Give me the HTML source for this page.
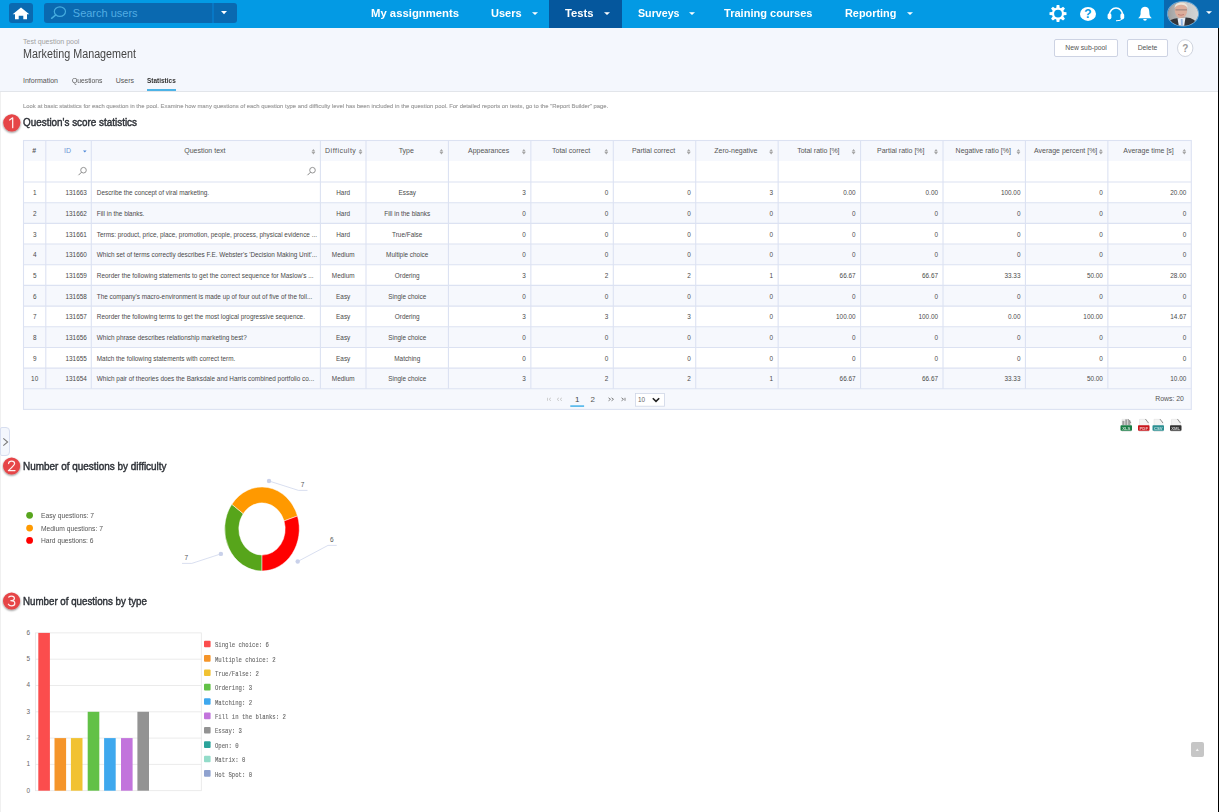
<!DOCTYPE html><html><head><meta charset="utf-8"><style>
html,body{margin:0;padding:0;}
body{width:1219px;height:812px;overflow:hidden;position:relative;background:#fff;font-family:"Liberation Sans",sans-serif;}
.t{position:absolute;white-space:nowrap;}
.r{position:absolute;}
svg{position:absolute;overflow:visible;}
</style></head><body>
<div class="r" style="left:0.00px;top:0.00px;width:1219.00px;height:28.00px;background:#039ae4;"></div>
<div class="r" style="left:9.00px;top:3.00px;width:24.00px;height:19.50px;background:#0a69b0;border-radius:3px;"></div>
<svg style="left:0;top:0" width="40" height="28"><path d="M21 7.6 L29.3 14.2 L27 14.2 L27 19.3 L23.3 19.3 L23.3 15.8 L18.7 15.8 L18.7 19.3 L15 19.3 L15 14.2 L12.7 14.2 Z" fill="#fff"/></svg>
<div class="r" style="left:44.00px;top:3.00px;width:193.00px;height:20.00px;background:#0a69b0;border-radius:3px;"></div>
<div class="r" style="left:212.30px;top:3.00px;width:1.40px;height:20.00px;background:#0778c6;"></div>
<svg style="left:0;top:0" width="240" height="28"><ellipse cx="59.9" cy="11.6" rx="5.6" ry="4.7" fill="none" stroke="#45acdf" stroke-width="1.2"/><line x1="55.8" y1="14.9" x2="51.6" y2="18.3" stroke="#45acdf" stroke-width="1.5" stroke-linecap="round"/><path d="M221 11 L227 11 L224 14.2 Z" fill="#fff"/></svg>
<div class="t" style="left:72.80px;top:7.59px;font-size:11px;line-height:11px;color:#52ade3;font-weight:normal;font-family:'Liberation Sans', sans-serif;">Search users</div>
<div class="t" style="left:370.70px;top:8.85px;font-size:10.1px;line-height:10.1px;color:#fff;font-weight:bold;font-family:'Liberation Sans', sans-serif;transform:scaleX(1.1209037776612891);transform-origin:left center;">My assignments</div>
<div class="t" style="left:491.30px;top:8.85px;font-size:10.1px;line-height:10.1px;color:#fff;font-weight:bold;font-family:'Liberation Sans', sans-serif;transform:scaleX(1.094215340537169);transform-origin:left center;">Users</div>
<div class="r" style="left:549.00px;top:0.00px;width:73.00px;height:28.00px;background:#05579d;"></div>
<div class="t" style="left:565.40px;top:8.85px;font-size:10.1px;line-height:10.1px;color:#fff;font-weight:bold;font-family:'Liberation Sans', sans-serif;transform:scaleX(1.1163572763644827);transform-origin:left center;">Tests</div>
<div class="t" style="left:638.00px;top:8.85px;font-size:10.1px;line-height:10.1px;color:#fff;font-weight:bold;font-family:'Liberation Sans', sans-serif;transform:scaleX(1.0566932064126295);transform-origin:left center;">Surveys</div>
<div class="t" style="left:723.50px;top:8.85px;font-size:10.1px;line-height:10.1px;color:#fff;font-weight:bold;font-family:'Liberation Sans', sans-serif;transform:scaleX(1.095823868101096);transform-origin:left center;">Training courses</div>
<div class="t" style="left:845.40px;top:8.85px;font-size:10.1px;line-height:10.1px;color:#fff;font-weight:bold;font-family:'Liberation Sans', sans-serif;transform:scaleX(1.078816401819554);transform-origin:left center;">Reporting</div>
<svg style="left:0;top:0" width="1219" height="28"><path d="M532 12.2 L538 12.2 L535 15 Z" fill="#fff"/><path d="M604 12.2 L610 12.2 L607 15 Z" fill="#fff"/><path d="M689 12.2 L695 12.2 L692 15 Z" fill="#fff"/><path d="M907 12.2 L913 12.2 L910 15 Z" fill="#fff"/></svg>
<svg style="left:0;top:0" width="1219" height="28">
<path transform="translate(1058,13.6)" fill="#fff" fill-rule="evenodd" d="M-1.68 -5.86 L-1.35 -8.49 L1.35 -8.49 L1.68 -5.86 L2.96 -5.34 L5.05 -6.96 L6.96 -5.05 L5.34 -2.96 L5.86 -1.68 L8.49 -1.35 L8.49 1.35 L5.86 1.68 L5.34 2.96 L6.96 5.05 L5.05 6.96 L2.96 5.34 L1.68 5.86 L1.35 8.49 L-1.35 8.49 L-1.68 5.86 L-2.96 5.34 L-5.05 6.96 L-6.96 5.05 L-5.34 2.96 L-5.86 1.68 L-8.49 1.35 L-8.49 -1.35 L-5.86 -1.68 L-5.34 -2.96 L-6.96 -5.05 L-5.05 -6.96 L-2.96 -5.34 Z M3.9 0 A3.9 3.9 0 1 0 -3.9 0 A3.9 3.9 0 1 0 3.9 0 Z"/>
<ellipse cx="1088" cy="13.9" rx="8" ry="7" fill="#fff"/>
<text x="1088" y="18.3" font-family="Liberation Sans" font-weight="bold" font-size="12" text-anchor="middle" fill="#039ae4">?</text>
<path d="M1109.5 15 A6.5 7 0 0 1 1122.5 15" fill="none" stroke="#fff" stroke-width="1.6"/>
<rect x="1107.6" y="13.2" width="3.8" height="6.2" rx="1.8" fill="#fff"/>
<rect x="1120.4" y="13.2" width="3.8" height="6.2" rx="1.8" fill="#fff"/>
<path d="M1122 19 Q1121 20.8 1116 20.8" fill="none" stroke="#fff" stroke-width="1"/>
<path d="M1145 6.8 C1141 6.8 1140.6 10.5 1140.6 13.5 C1140.6 16 1139.5 17 1138.2 18.3 L1151.8 18.3 C1150.5 17 1149.4 16 1149.4 13.5 C1149.4 10.5 1149 6.8 1145 6.8 Z" fill="#fff"/>
<path d="M1143.2 19 L1146.8 19 A1.8 1.8 0 0 1 1143.2 19 Z" fill="#fff"/>
</svg>
<div class="r" style="left:1163.50px;top:0.00px;width:55.50px;height:28.00px;background:#0a69b0;"></div>
<svg style="left:0;top:0" width="1219" height="28">
<defs><clipPath id="av"><ellipse cx="1183" cy="13.7" rx="15.2" ry="12"/></clipPath>
<linearGradient id="avbg" x1="0" x2="1" y1="0" y2="0"><stop offset="0" stop-color="#8c8c8c"/><stop offset="0.5" stop-color="#c8c8c8"/><stop offset="1" stop-color="#e0e0e0"/></linearGradient></defs>
<ellipse cx="1183" cy="13.7" rx="16" ry="12.8" fill="#6fb4e4"/>
<ellipse cx="1183" cy="13.7" rx="15.2" ry="12" fill="#1d5d96"/>
<g clip-path="url(#av)">
<rect x="1160" y="0" width="50" height="30" fill="url(#avbg)"/>
<ellipse cx="1181" cy="10.5" rx="6.2" ry="7.8" fill="#dcae9c"/>
<path d="M1174.5 8 Q1175 2.5 1181 2.5 Q1187.5 2.5 1187.8 8 Q1185 4.6 1181 4.8 Q1177 4.8 1174.5 8 Z" fill="#ece6da"/>
<rect x="1175.5" y="9.2" width="11.5" height="1.3" fill="#7a6a6a" opacity="0.55"/>
<path d="M1178 14.5 Q1181 16 1184 14.5" stroke="#b06060" stroke-width="0.9" fill="none" opacity="0.7"/>
<path d="M1163 30 Q1166 19.5 1177 18.3 L1186 17.5 Q1197 17.5 1200 30 Z" fill="#34353a"/>
<path d="M1177.5 18.3 L1185.5 17.6 L1183.5 30 L1179.5 30 Z" fill="#e6ebf3"/>
<path d="M1180.8 19 L1182.6 19 L1183 28 L1181 28 Z" fill="#94b6e2"/>
</g>
<path d="M1206 11.2 L1212 11.2 L1209 14 Z" fill="#fff"/>
</svg>
<div class="r" style="left:0.00px;top:28.00px;width:1219.00px;height:63.00px;background:#f4f7fd;"></div>
<div class="r" style="left:0.00px;top:91.00px;width:1219.00px;height:1.00px;background:#e2e5ea;"></div>
<div class="t" style="left:23.00px;top:38.07px;font-size:7px;line-height:7px;color:#a0a0a0;font-weight:normal;font-family:'Liberation Sans', sans-serif;">Test question pool</div>
<div class="t" style="left:23.00px;top:47.62px;font-size:12.5px;line-height:12.5px;color:#454545;font-weight:normal;font-family:'Liberation Sans', sans-serif;transform:scaleX(0.8604279296428843);transform-origin:left center;">Marketing Management</div>
<div class="t" style="left:23.00px;top:77.47px;font-size:7px;line-height:7px;color:#555;font-weight:normal;font-family:'Liberation Sans', sans-serif;">Information</div>
<div class="t" style="left:72.00px;top:77.47px;font-size:7px;line-height:7px;color:#555;font-weight:normal;font-family:'Liberation Sans', sans-serif;transform:scaleX(0.9673326990168094);transform-origin:left center;">Questions</div>
<div class="t" style="left:115.70px;top:77.47px;font-size:7px;line-height:7px;color:#555;font-weight:normal;font-family:'Liberation Sans', sans-serif;">Users</div>
<div class="t" style="left:147.20px;top:77.81px;font-size:6.6px;line-height:6.6px;color:#333;font-weight:bold;font-family:'Liberation Sans', sans-serif;transform:scaleX(0.98);transform-origin:left center;">Statistics</div>
<div class="r" style="left:147.00px;top:89.20px;width:29.00px;height:2.00px;background:#4db3e6;"></div>
<div class="r" style="left:1054.40px;top:39.00px;width:63.20px;height:17.50px;background:#fff;box-sizing:border-box;border:1px solid #cdd3e3;border-radius:2px;"></div>
<div class="t" style="left:886.00px;width:400px;text-align:center;top:45.04px;font-size:6.8px;line-height:6.8px;color:#555;font-weight:normal;font-family:'Liberation Sans', sans-serif;">New sub-pool</div>
<div class="r" style="left:1127.00px;top:39.00px;width:41.00px;height:17.50px;background:#fff;box-sizing:border-box;border:1px solid #cdd3e3;border-radius:2px;"></div>
<div class="t" style="left:947.50px;width:400px;text-align:center;top:45.04px;font-size:6.8px;line-height:6.8px;color:#555;font-weight:normal;font-family:'Liberation Sans', sans-serif;">Delete</div>
<svg style="left:0;top:0" width="1219" height="100"><ellipse cx="1185.2" cy="48.1" rx="7.7" ry="8.4" fill="#fff" stroke="#cfd4de" stroke-width="1"/><text x="1185.2" y="52" font-family="Liberation Sans" font-weight="bold" font-size="10" text-anchor="middle" fill="#9a9a9a">?</text></svg>
<div class="r" style="left:0.00px;top:92.00px;width:1.00px;height:720.00px;background:#f0f0f0;"></div>
<div class="r" style="left:1218.00px;top:28.00px;width:1.00px;height:784.00px;background:#000;"></div>
<div class="t" style="left:23.00px;top:104.43px;font-size:5.87px;line-height:5.87px;color:#9c9c9c;font-weight:normal;font-family:'Liberation Sans', sans-serif;transform:scaleX(1.003);transform-origin:left center;-webkit-text-stroke:0.15px #9c9c9c;">Look at basic statistics for each question in the pool. Examine how many questions of each question type and difficulty level has been included in the question pool. For detailed reports on tests, go to the "Report Builder" page.</div>
<svg style="left:0;top:0" width="40" height="812"><defs><filter id="sh1" x="-50%" y="-50%" width="200%" height="200%"><feGaussianBlur in="SourceAlpha" stdDeviation="1.0"/><feOffset dx="0.2" dy="1.4"/><feComponentTransfer><feFuncA type="linear" slope="0.5"/></feComponentTransfer><feMerge><feMergeNode/><feMergeNode in="SourceGraphic"/></feMerge></filter></defs><circle cx="11.8" cy="122.8" r="8.6" fill="#e64447" filter="url(#sh1)"/><path d="M12.70 127.70 L12.70 117.80 L9.60 120.00" fill="none" stroke="#fff" stroke-width="1.25" stroke-linecap="round" stroke-linejoin="round" opacity="0.92"/></svg>
<div class="t" style="left:23.00px;top:117.16px;font-size:10.8px;line-height:10.8px;color:#2e3238;font-weight:normal;font-family:'Liberation Sans', sans-serif;transform:scaleX(0.9156305584032104);transform-origin:left center;-webkit-text-stroke:0.45px #2e3238;">Question's score statistics</div>
<svg style="left:0;top:0" width="1219" height="812"><rect x="23.5" y="140.5" width="1167.80" height="20.5" fill="#f6f8fd"/><rect x="23.5" y="202.68" width="1167.80" height="20.68" fill="#f6f8fd"/><rect x="23.5" y="244.04" width="1167.80" height="20.68" fill="#f6f8fd"/><rect x="23.5" y="285.40" width="1167.80" height="20.68" fill="#f6f8fd"/><rect x="23.5" y="326.76" width="1167.80" height="20.68" fill="#f6f8fd"/><rect x="23.5" y="368.12" width="1167.80" height="20.68" fill="#f6f8fd"/><rect x="23.5" y="388.80" width="1167.80" height="20.60" fill="#f6f8fd"/><line x1="45.80" y1="140.5" x2="45.80" y2="388.80" stroke="#dce2f2" stroke-width="1.1"/><line x1="91.30" y1="140.5" x2="91.30" y2="388.80" stroke="#dce2f2" stroke-width="1.1"/><line x1="320.40" y1="140.5" x2="320.40" y2="388.80" stroke="#dce2f2" stroke-width="1.1"/><line x1="366.00" y1="140.5" x2="366.00" y2="388.80" stroke="#dce2f2" stroke-width="1.1"/><line x1="448.43" y1="140.5" x2="448.43" y2="388.80" stroke="#dce2f2" stroke-width="1.1"/><line x1="530.86" y1="140.5" x2="530.86" y2="388.80" stroke="#dce2f2" stroke-width="1.1"/><line x1="613.29" y1="140.5" x2="613.29" y2="388.80" stroke="#dce2f2" stroke-width="1.1"/><line x1="695.72" y1="140.5" x2="695.72" y2="388.80" stroke="#dce2f2" stroke-width="1.1"/><line x1="778.15" y1="140.5" x2="778.15" y2="388.80" stroke="#dce2f2" stroke-width="1.1"/><line x1="860.58" y1="140.5" x2="860.58" y2="388.80" stroke="#dce2f2" stroke-width="1.1"/><line x1="943.01" y1="140.5" x2="943.01" y2="388.80" stroke="#dce2f2" stroke-width="1.1"/><line x1="1025.44" y1="140.5" x2="1025.44" y2="388.80" stroke="#dce2f2" stroke-width="1.1"/><line x1="1107.87" y1="140.5" x2="1107.87" y2="388.80" stroke="#dce2f2" stroke-width="1.1"/><line x1="23.5" y1="182.00" x2="1191.3" y2="182.00" stroke="#dce2f2" stroke-width="1.1"/><line x1="23.5" y1="202.68" x2="1191.3" y2="202.68" stroke="#dce2f2" stroke-width="1.1"/><line x1="23.5" y1="223.36" x2="1191.3" y2="223.36" stroke="#dce2f2" stroke-width="1.1"/><line x1="23.5" y1="244.04" x2="1191.3" y2="244.04" stroke="#dce2f2" stroke-width="1.1"/><line x1="23.5" y1="264.72" x2="1191.3" y2="264.72" stroke="#dce2f2" stroke-width="1.1"/><line x1="23.5" y1="285.40" x2="1191.3" y2="285.40" stroke="#dce2f2" stroke-width="1.1"/><line x1="23.5" y1="306.08" x2="1191.3" y2="306.08" stroke="#dce2f2" stroke-width="1.1"/><line x1="23.5" y1="326.76" x2="1191.3" y2="326.76" stroke="#dce2f2" stroke-width="1.1"/><line x1="23.5" y1="347.44" x2="1191.3" y2="347.44" stroke="#dce2f2" stroke-width="1.1"/><line x1="23.5" y1="368.12" x2="1191.3" y2="368.12" stroke="#dce2f2" stroke-width="1.1"/><line x1="23.5" y1="388.80" x2="1191.3" y2="388.80" stroke="#dce2f2" stroke-width="1.1"/><rect x="23.5" y="140.5" width="1167.80" height="268.90" fill="none" stroke="#dce2f2" stroke-width="1.1"/></svg>
<div class="t" style="left:-165.85px;width:400px;text-align:center;top:147.27px;font-size:7px;line-height:7px;color:#555;font-weight:bold;font-family:'Liberation Sans', sans-serif;">#</div>
<div class="t" style="left:-132.45px;width:400px;text-align:center;top:147.27px;font-size:7px;line-height:7px;color:#6a94d4;font-weight:normal;font-family:'Liberation Sans', sans-serif;">ID</div>
<div class="t" style="left:4.85px;width:400px;text-align:center;top:147.27px;font-size:7px;line-height:7px;color:#555;font-weight:normal;font-family:'Liberation Sans', sans-serif;">Question text</div>
<div class="t" style="left:140.70px;width:400px;text-align:center;top:147.27px;font-size:7px;line-height:7px;color:#555;font-weight:normal;font-family:'Liberation Sans', sans-serif;letter-spacing:0.5px;">Difficulty</div>
<div class="t" style="left:206.22px;width:400px;text-align:center;top:147.27px;font-size:7px;line-height:7px;color:#555;font-weight:normal;font-family:'Liberation Sans', sans-serif;">Type</div>
<div class="t" style="left:288.64px;width:400px;text-align:center;top:147.27px;font-size:7px;line-height:7px;color:#555;font-weight:normal;font-family:'Liberation Sans', sans-serif;">Appearances</div>
<div class="t" style="left:371.08px;width:400px;text-align:center;top:147.27px;font-size:7px;line-height:7px;color:#555;font-weight:normal;font-family:'Liberation Sans', sans-serif;">Total correct</div>
<div class="t" style="left:453.50px;width:400px;text-align:center;top:147.27px;font-size:7px;line-height:7px;color:#555;font-weight:normal;font-family:'Liberation Sans', sans-serif;">Partial correct</div>
<div class="t" style="left:535.94px;width:400px;text-align:center;top:147.27px;font-size:7px;line-height:7px;color:#555;font-weight:normal;font-family:'Liberation Sans', sans-serif;">Zero-negative</div>
<div class="t" style="left:618.37px;width:400px;text-align:center;top:147.27px;font-size:7px;line-height:7px;color:#555;font-weight:normal;font-family:'Liberation Sans', sans-serif;">Total ratio [%]</div>
<div class="t" style="left:700.80px;width:400px;text-align:center;top:147.27px;font-size:7px;line-height:7px;color:#555;font-weight:normal;font-family:'Liberation Sans', sans-serif;">Partial ratio [%]</div>
<div class="t" style="left:783.23px;width:400px;text-align:center;top:147.27px;font-size:7px;line-height:7px;color:#555;font-weight:normal;font-family:'Liberation Sans', sans-serif;">Negative ratio [%]</div>
<div class="t" style="left:865.66px;width:400px;text-align:center;top:147.27px;font-size:7px;line-height:7px;color:#555;font-weight:normal;font-family:'Liberation Sans', sans-serif;">Average percent [%]</div>
<div class="t" style="left:948.59px;width:400px;text-align:center;top:147.27px;font-size:7px;line-height:7px;color:#555;font-weight:normal;font-family:'Liberation Sans', sans-serif;">Average time [s]</div>
<svg style="left:0;top:0" width="1219" height="200"><path d="M83.0 150.6 L86.6 150.6 L84.8 152.6 Z" fill="#4a86d8"/><path d="M311.5 151.5 L315.29999999999995 151.5 L313.4 149.0 Z M311.5 152.1 L315.29999999999995 152.1 L313.4 154.6 Z" fill="#a6a6a6"/><path d="M358.6 151.5 L362.4 151.5 L360.5 149.0 Z M358.6 152.1 L362.4 152.1 L360.5 154.6 Z" fill="#a6a6a6"/><path d="M439.53000000000003 151.5 L443.33 151.5 L441.43 149.0 Z M439.53000000000003 152.1 L443.33 152.1 L441.43 154.6 Z" fill="#a6a6a6"/><path d="M521.96 151.5 L525.76 151.5 L523.86 149.0 Z M521.96 152.1 L525.76 152.1 L523.86 154.6 Z" fill="#a6a6a6"/><path d="M604.39 151.5 L608.1899999999999 151.5 L606.29 149.0 Z M604.39 152.1 L608.1899999999999 152.1 L606.29 154.6 Z" fill="#a6a6a6"/><path d="M686.82 151.5 L690.62 151.5 L688.72 149.0 Z M686.82 152.1 L690.62 152.1 L688.72 154.6 Z" fill="#a6a6a6"/><path d="M769.2500000000001 151.5 L773.0500000000001 151.5 L771.1500000000001 149.0 Z M769.2500000000001 152.1 L773.0500000000001 152.1 L771.1500000000001 154.6 Z" fill="#a6a6a6"/><path d="M851.6800000000001 151.5 L855.48 151.5 L853.58 149.0 Z M851.6800000000001 152.1 L855.48 152.1 L853.58 154.6 Z" fill="#a6a6a6"/><path d="M934.11 151.5 L937.91 151.5 L936.01 149.0 Z M934.11 152.1 L937.91 152.1 L936.01 154.6 Z" fill="#a6a6a6"/><path d="M1016.5400000000001 151.5 L1020.34 151.5 L1018.44 149.0 Z M1016.5400000000001 152.1 L1020.34 152.1 L1018.44 154.6 Z" fill="#a6a6a6"/><path d="M1098.97 151.5 L1102.7700000000002 151.5 L1100.8700000000001 149.0 Z M1098.97 152.1 L1102.7700000000002 152.1 L1100.8700000000001 154.6 Z" fill="#a6a6a6"/><path d="M1182.3999999999999 151.5 L1186.2 151.5 L1184.3 149.0 Z M1182.3999999999999 152.1 L1186.2 152.1 L1184.3 154.6 Z" fill="#a6a6a6"/><circle cx="83.5" cy="170.2" r="2.8" fill="none" stroke="#888" stroke-width="0.9"/><line x1="81.5" y1="172.2" x2="78.5" y2="175.2" stroke="#888" stroke-width="1"/><circle cx="312.5" cy="170.2" r="2.8" fill="none" stroke="#888" stroke-width="0.9"/><line x1="310.5" y1="172.2" x2="307.5" y2="175.2" stroke="#888" stroke-width="1"/></svg>
<div class="t" style="left:-165.35px;width:400px;text-align:center;top:190.28px;font-size:6.4px;line-height:6.4px;color:#4a4a4a;font-weight:normal;font-family:'Liberation Sans', sans-serif;">1</div>
<div class="t" style="right:1132.20px;top:190.28px;font-size:6.4px;line-height:6.4px;color:#4a4a4a;font-weight:normal;font-family:'Liberation Sans', sans-serif;">131663</div>
<div class="t" style="left:96.80px;top:190.28px;font-size:6.4px;line-height:6.4px;color:#4a4a4a;font-weight:normal;font-family:'Liberation Sans', sans-serif;">Describe the concept of viral marketing.</div>
<div class="t" style="left:143.20px;width:400px;text-align:center;top:190.28px;font-size:6.4px;line-height:6.4px;color:#4a4a4a;font-weight:normal;font-family:'Liberation Sans', sans-serif;">Hard</div>
<div class="t" style="left:207.22px;width:400px;text-align:center;top:190.28px;font-size:6.4px;line-height:6.4px;color:#4a4a4a;font-weight:normal;font-family:'Liberation Sans', sans-serif;">Essay</div>
<div class="t" style="right:693.14px;top:190.28px;font-size:6.4px;line-height:6.4px;color:#4a4a4a;font-weight:normal;font-family:'Liberation Sans', sans-serif;">3</div>
<div class="t" style="right:610.71px;top:190.28px;font-size:6.4px;line-height:6.4px;color:#4a4a4a;font-weight:normal;font-family:'Liberation Sans', sans-serif;">0</div>
<div class="t" style="right:528.28px;top:190.28px;font-size:6.4px;line-height:6.4px;color:#4a4a4a;font-weight:normal;font-family:'Liberation Sans', sans-serif;">0</div>
<div class="t" style="right:445.85px;top:190.28px;font-size:6.4px;line-height:6.4px;color:#4a4a4a;font-weight:normal;font-family:'Liberation Sans', sans-serif;">3</div>
<div class="t" style="right:363.42px;top:190.28px;font-size:6.4px;line-height:6.4px;color:#4a4a4a;font-weight:normal;font-family:'Liberation Sans', sans-serif;">0.00</div>
<div class="t" style="right:280.99px;top:190.28px;font-size:6.4px;line-height:6.4px;color:#4a4a4a;font-weight:normal;font-family:'Liberation Sans', sans-serif;">0.00</div>
<div class="t" style="right:198.56px;top:190.28px;font-size:6.4px;line-height:6.4px;color:#4a4a4a;font-weight:normal;font-family:'Liberation Sans', sans-serif;">100.00</div>
<div class="t" style="right:116.13px;top:190.28px;font-size:6.4px;line-height:6.4px;color:#4a4a4a;font-weight:normal;font-family:'Liberation Sans', sans-serif;">0</div>
<div class="t" style="right:32.70px;top:190.28px;font-size:6.4px;line-height:6.4px;color:#4a4a4a;font-weight:normal;font-family:'Liberation Sans', sans-serif;">20.00</div>
<div class="t" style="left:-165.35px;width:400px;text-align:center;top:210.96px;font-size:6.4px;line-height:6.4px;color:#4a4a4a;font-weight:normal;font-family:'Liberation Sans', sans-serif;">2</div>
<div class="t" style="right:1132.20px;top:210.96px;font-size:6.4px;line-height:6.4px;color:#4a4a4a;font-weight:normal;font-family:'Liberation Sans', sans-serif;">131662</div>
<div class="t" style="left:96.80px;top:210.96px;font-size:6.4px;line-height:6.4px;color:#4a4a4a;font-weight:normal;font-family:'Liberation Sans', sans-serif;">Fill in the blanks.</div>
<div class="t" style="left:143.20px;width:400px;text-align:center;top:210.96px;font-size:6.4px;line-height:6.4px;color:#4a4a4a;font-weight:normal;font-family:'Liberation Sans', sans-serif;">Hard</div>
<div class="t" style="left:207.22px;width:400px;text-align:center;top:210.96px;font-size:6.4px;line-height:6.4px;color:#4a4a4a;font-weight:normal;font-family:'Liberation Sans', sans-serif;">Fill in the blanks</div>
<div class="t" style="right:693.14px;top:210.96px;font-size:6.4px;line-height:6.4px;color:#4a4a4a;font-weight:normal;font-family:'Liberation Sans', sans-serif;">0</div>
<div class="t" style="right:610.71px;top:210.96px;font-size:6.4px;line-height:6.4px;color:#4a4a4a;font-weight:normal;font-family:'Liberation Sans', sans-serif;">0</div>
<div class="t" style="right:528.28px;top:210.96px;font-size:6.4px;line-height:6.4px;color:#4a4a4a;font-weight:normal;font-family:'Liberation Sans', sans-serif;">0</div>
<div class="t" style="right:445.85px;top:210.96px;font-size:6.4px;line-height:6.4px;color:#4a4a4a;font-weight:normal;font-family:'Liberation Sans', sans-serif;">0</div>
<div class="t" style="right:363.42px;top:210.96px;font-size:6.4px;line-height:6.4px;color:#4a4a4a;font-weight:normal;font-family:'Liberation Sans', sans-serif;">0</div>
<div class="t" style="right:280.99px;top:210.96px;font-size:6.4px;line-height:6.4px;color:#4a4a4a;font-weight:normal;font-family:'Liberation Sans', sans-serif;">0</div>
<div class="t" style="right:198.56px;top:210.96px;font-size:6.4px;line-height:6.4px;color:#4a4a4a;font-weight:normal;font-family:'Liberation Sans', sans-serif;">0</div>
<div class="t" style="right:116.13px;top:210.96px;font-size:6.4px;line-height:6.4px;color:#4a4a4a;font-weight:normal;font-family:'Liberation Sans', sans-serif;">0</div>
<div class="t" style="right:32.70px;top:210.96px;font-size:6.4px;line-height:6.4px;color:#4a4a4a;font-weight:normal;font-family:'Liberation Sans', sans-serif;">0</div>
<div class="t" style="left:-165.35px;width:400px;text-align:center;top:231.64px;font-size:6.4px;line-height:6.4px;color:#4a4a4a;font-weight:normal;font-family:'Liberation Sans', sans-serif;">3</div>
<div class="t" style="right:1132.20px;top:231.64px;font-size:6.4px;line-height:6.4px;color:#4a4a4a;font-weight:normal;font-family:'Liberation Sans', sans-serif;">131661</div>
<div class="t" style="left:96.80px;top:231.64px;font-size:6.4px;line-height:6.4px;color:#4a4a4a;font-weight:normal;font-family:'Liberation Sans', sans-serif;">Terms: product, price, place, promotion, people, process, physical evidence ...</div>
<div class="t" style="left:143.20px;width:400px;text-align:center;top:231.64px;font-size:6.4px;line-height:6.4px;color:#4a4a4a;font-weight:normal;font-family:'Liberation Sans', sans-serif;">Hard</div>
<div class="t" style="left:207.22px;width:400px;text-align:center;top:231.64px;font-size:6.4px;line-height:6.4px;color:#4a4a4a;font-weight:normal;font-family:'Liberation Sans', sans-serif;">True/False</div>
<div class="t" style="right:693.14px;top:231.64px;font-size:6.4px;line-height:6.4px;color:#4a4a4a;font-weight:normal;font-family:'Liberation Sans', sans-serif;">0</div>
<div class="t" style="right:610.71px;top:231.64px;font-size:6.4px;line-height:6.4px;color:#4a4a4a;font-weight:normal;font-family:'Liberation Sans', sans-serif;">0</div>
<div class="t" style="right:528.28px;top:231.64px;font-size:6.4px;line-height:6.4px;color:#4a4a4a;font-weight:normal;font-family:'Liberation Sans', sans-serif;">0</div>
<div class="t" style="right:445.85px;top:231.64px;font-size:6.4px;line-height:6.4px;color:#4a4a4a;font-weight:normal;font-family:'Liberation Sans', sans-serif;">0</div>
<div class="t" style="right:363.42px;top:231.64px;font-size:6.4px;line-height:6.4px;color:#4a4a4a;font-weight:normal;font-family:'Liberation Sans', sans-serif;">0</div>
<div class="t" style="right:280.99px;top:231.64px;font-size:6.4px;line-height:6.4px;color:#4a4a4a;font-weight:normal;font-family:'Liberation Sans', sans-serif;">0</div>
<div class="t" style="right:198.56px;top:231.64px;font-size:6.4px;line-height:6.4px;color:#4a4a4a;font-weight:normal;font-family:'Liberation Sans', sans-serif;">0</div>
<div class="t" style="right:116.13px;top:231.64px;font-size:6.4px;line-height:6.4px;color:#4a4a4a;font-weight:normal;font-family:'Liberation Sans', sans-serif;">0</div>
<div class="t" style="right:32.70px;top:231.64px;font-size:6.4px;line-height:6.4px;color:#4a4a4a;font-weight:normal;font-family:'Liberation Sans', sans-serif;">0</div>
<div class="t" style="left:-165.35px;width:400px;text-align:center;top:252.32px;font-size:6.4px;line-height:6.4px;color:#4a4a4a;font-weight:normal;font-family:'Liberation Sans', sans-serif;">4</div>
<div class="t" style="right:1132.20px;top:252.32px;font-size:6.4px;line-height:6.4px;color:#4a4a4a;font-weight:normal;font-family:'Liberation Sans', sans-serif;">131660</div>
<div class="t" style="left:96.80px;top:252.32px;font-size:6.4px;line-height:6.4px;color:#4a4a4a;font-weight:normal;font-family:'Liberation Sans', sans-serif;">Which set of terms correctly describes F.E. Webster's 'Decision Making Unit'...</div>
<div class="t" style="left:143.20px;width:400px;text-align:center;top:252.32px;font-size:6.4px;line-height:6.4px;color:#4a4a4a;font-weight:normal;font-family:'Liberation Sans', sans-serif;">Medium</div>
<div class="t" style="left:207.22px;width:400px;text-align:center;top:252.32px;font-size:6.4px;line-height:6.4px;color:#4a4a4a;font-weight:normal;font-family:'Liberation Sans', sans-serif;">Multiple choice</div>
<div class="t" style="right:693.14px;top:252.32px;font-size:6.4px;line-height:6.4px;color:#4a4a4a;font-weight:normal;font-family:'Liberation Sans', sans-serif;">0</div>
<div class="t" style="right:610.71px;top:252.32px;font-size:6.4px;line-height:6.4px;color:#4a4a4a;font-weight:normal;font-family:'Liberation Sans', sans-serif;">0</div>
<div class="t" style="right:528.28px;top:252.32px;font-size:6.4px;line-height:6.4px;color:#4a4a4a;font-weight:normal;font-family:'Liberation Sans', sans-serif;">0</div>
<div class="t" style="right:445.85px;top:252.32px;font-size:6.4px;line-height:6.4px;color:#4a4a4a;font-weight:normal;font-family:'Liberation Sans', sans-serif;">0</div>
<div class="t" style="right:363.42px;top:252.32px;font-size:6.4px;line-height:6.4px;color:#4a4a4a;font-weight:normal;font-family:'Liberation Sans', sans-serif;">0</div>
<div class="t" style="right:280.99px;top:252.32px;font-size:6.4px;line-height:6.4px;color:#4a4a4a;font-weight:normal;font-family:'Liberation Sans', sans-serif;">0</div>
<div class="t" style="right:198.56px;top:252.32px;font-size:6.4px;line-height:6.4px;color:#4a4a4a;font-weight:normal;font-family:'Liberation Sans', sans-serif;">0</div>
<div class="t" style="right:116.13px;top:252.32px;font-size:6.4px;line-height:6.4px;color:#4a4a4a;font-weight:normal;font-family:'Liberation Sans', sans-serif;">0</div>
<div class="t" style="right:32.70px;top:252.32px;font-size:6.4px;line-height:6.4px;color:#4a4a4a;font-weight:normal;font-family:'Liberation Sans', sans-serif;">0</div>
<div class="t" style="left:-165.35px;width:400px;text-align:center;top:273.00px;font-size:6.4px;line-height:6.4px;color:#4a4a4a;font-weight:normal;font-family:'Liberation Sans', sans-serif;">5</div>
<div class="t" style="right:1132.20px;top:273.00px;font-size:6.4px;line-height:6.4px;color:#4a4a4a;font-weight:normal;font-family:'Liberation Sans', sans-serif;">131659</div>
<div class="t" style="left:96.80px;top:273.00px;font-size:6.4px;line-height:6.4px;color:#4a4a4a;font-weight:normal;font-family:'Liberation Sans', sans-serif;">Reorder the following statements to get the correct sequence for Maslow's ...</div>
<div class="t" style="left:143.20px;width:400px;text-align:center;top:273.00px;font-size:6.4px;line-height:6.4px;color:#4a4a4a;font-weight:normal;font-family:'Liberation Sans', sans-serif;">Medium</div>
<div class="t" style="left:207.22px;width:400px;text-align:center;top:273.00px;font-size:6.4px;line-height:6.4px;color:#4a4a4a;font-weight:normal;font-family:'Liberation Sans', sans-serif;">Ordering</div>
<div class="t" style="right:693.14px;top:273.00px;font-size:6.4px;line-height:6.4px;color:#4a4a4a;font-weight:normal;font-family:'Liberation Sans', sans-serif;">3</div>
<div class="t" style="right:610.71px;top:273.00px;font-size:6.4px;line-height:6.4px;color:#4a4a4a;font-weight:normal;font-family:'Liberation Sans', sans-serif;">2</div>
<div class="t" style="right:528.28px;top:273.00px;font-size:6.4px;line-height:6.4px;color:#4a4a4a;font-weight:normal;font-family:'Liberation Sans', sans-serif;">2</div>
<div class="t" style="right:445.85px;top:273.00px;font-size:6.4px;line-height:6.4px;color:#4a4a4a;font-weight:normal;font-family:'Liberation Sans', sans-serif;">1</div>
<div class="t" style="right:363.42px;top:273.00px;font-size:6.4px;line-height:6.4px;color:#4a4a4a;font-weight:normal;font-family:'Liberation Sans', sans-serif;">66.67</div>
<div class="t" style="right:280.99px;top:273.00px;font-size:6.4px;line-height:6.4px;color:#4a4a4a;font-weight:normal;font-family:'Liberation Sans', sans-serif;">66.67</div>
<div class="t" style="right:198.56px;top:273.00px;font-size:6.4px;line-height:6.4px;color:#4a4a4a;font-weight:normal;font-family:'Liberation Sans', sans-serif;">33.33</div>
<div class="t" style="right:116.13px;top:273.00px;font-size:6.4px;line-height:6.4px;color:#4a4a4a;font-weight:normal;font-family:'Liberation Sans', sans-serif;">50.00</div>
<div class="t" style="right:32.70px;top:273.00px;font-size:6.4px;line-height:6.4px;color:#4a4a4a;font-weight:normal;font-family:'Liberation Sans', sans-serif;">28.00</div>
<div class="t" style="left:-165.35px;width:400px;text-align:center;top:293.68px;font-size:6.4px;line-height:6.4px;color:#4a4a4a;font-weight:normal;font-family:'Liberation Sans', sans-serif;">6</div>
<div class="t" style="right:1132.20px;top:293.68px;font-size:6.4px;line-height:6.4px;color:#4a4a4a;font-weight:normal;font-family:'Liberation Sans', sans-serif;">131658</div>
<div class="t" style="left:96.80px;top:293.68px;font-size:6.4px;line-height:6.4px;color:#4a4a4a;font-weight:normal;font-family:'Liberation Sans', sans-serif;">The company's macro-environment is made up of four out of five of the foll...</div>
<div class="t" style="left:143.20px;width:400px;text-align:center;top:293.68px;font-size:6.4px;line-height:6.4px;color:#4a4a4a;font-weight:normal;font-family:'Liberation Sans', sans-serif;">Easy</div>
<div class="t" style="left:207.22px;width:400px;text-align:center;top:293.68px;font-size:6.4px;line-height:6.4px;color:#4a4a4a;font-weight:normal;font-family:'Liberation Sans', sans-serif;">Single choice</div>
<div class="t" style="right:693.14px;top:293.68px;font-size:6.4px;line-height:6.4px;color:#4a4a4a;font-weight:normal;font-family:'Liberation Sans', sans-serif;">0</div>
<div class="t" style="right:610.71px;top:293.68px;font-size:6.4px;line-height:6.4px;color:#4a4a4a;font-weight:normal;font-family:'Liberation Sans', sans-serif;">0</div>
<div class="t" style="right:528.28px;top:293.68px;font-size:6.4px;line-height:6.4px;color:#4a4a4a;font-weight:normal;font-family:'Liberation Sans', sans-serif;">0</div>
<div class="t" style="right:445.85px;top:293.68px;font-size:6.4px;line-height:6.4px;color:#4a4a4a;font-weight:normal;font-family:'Liberation Sans', sans-serif;">0</div>
<div class="t" style="right:363.42px;top:293.68px;font-size:6.4px;line-height:6.4px;color:#4a4a4a;font-weight:normal;font-family:'Liberation Sans', sans-serif;">0</div>
<div class="t" style="right:280.99px;top:293.68px;font-size:6.4px;line-height:6.4px;color:#4a4a4a;font-weight:normal;font-family:'Liberation Sans', sans-serif;">0</div>
<div class="t" style="right:198.56px;top:293.68px;font-size:6.4px;line-height:6.4px;color:#4a4a4a;font-weight:normal;font-family:'Liberation Sans', sans-serif;">0</div>
<div class="t" style="right:116.13px;top:293.68px;font-size:6.4px;line-height:6.4px;color:#4a4a4a;font-weight:normal;font-family:'Liberation Sans', sans-serif;">0</div>
<div class="t" style="right:32.70px;top:293.68px;font-size:6.4px;line-height:6.4px;color:#4a4a4a;font-weight:normal;font-family:'Liberation Sans', sans-serif;">0</div>
<div class="t" style="left:-165.35px;width:400px;text-align:center;top:314.36px;font-size:6.4px;line-height:6.4px;color:#4a4a4a;font-weight:normal;font-family:'Liberation Sans', sans-serif;">7</div>
<div class="t" style="right:1132.20px;top:314.36px;font-size:6.4px;line-height:6.4px;color:#4a4a4a;font-weight:normal;font-family:'Liberation Sans', sans-serif;">131657</div>
<div class="t" style="left:96.80px;top:314.36px;font-size:6.4px;line-height:6.4px;color:#4a4a4a;font-weight:normal;font-family:'Liberation Sans', sans-serif;">Reorder the following terms to get the most logical progressive sequence.</div>
<div class="t" style="left:143.20px;width:400px;text-align:center;top:314.36px;font-size:6.4px;line-height:6.4px;color:#4a4a4a;font-weight:normal;font-family:'Liberation Sans', sans-serif;">Easy</div>
<div class="t" style="left:207.22px;width:400px;text-align:center;top:314.36px;font-size:6.4px;line-height:6.4px;color:#4a4a4a;font-weight:normal;font-family:'Liberation Sans', sans-serif;">Ordering</div>
<div class="t" style="right:693.14px;top:314.36px;font-size:6.4px;line-height:6.4px;color:#4a4a4a;font-weight:normal;font-family:'Liberation Sans', sans-serif;">3</div>
<div class="t" style="right:610.71px;top:314.36px;font-size:6.4px;line-height:6.4px;color:#4a4a4a;font-weight:normal;font-family:'Liberation Sans', sans-serif;">3</div>
<div class="t" style="right:528.28px;top:314.36px;font-size:6.4px;line-height:6.4px;color:#4a4a4a;font-weight:normal;font-family:'Liberation Sans', sans-serif;">3</div>
<div class="t" style="right:445.85px;top:314.36px;font-size:6.4px;line-height:6.4px;color:#4a4a4a;font-weight:normal;font-family:'Liberation Sans', sans-serif;">0</div>
<div class="t" style="right:363.42px;top:314.36px;font-size:6.4px;line-height:6.4px;color:#4a4a4a;font-weight:normal;font-family:'Liberation Sans', sans-serif;">100.00</div>
<div class="t" style="right:280.99px;top:314.36px;font-size:6.4px;line-height:6.4px;color:#4a4a4a;font-weight:normal;font-family:'Liberation Sans', sans-serif;">100.00</div>
<div class="t" style="right:198.56px;top:314.36px;font-size:6.4px;line-height:6.4px;color:#4a4a4a;font-weight:normal;font-family:'Liberation Sans', sans-serif;">0.00</div>
<div class="t" style="right:116.13px;top:314.36px;font-size:6.4px;line-height:6.4px;color:#4a4a4a;font-weight:normal;font-family:'Liberation Sans', sans-serif;">100.00</div>
<div class="t" style="right:32.70px;top:314.36px;font-size:6.4px;line-height:6.4px;color:#4a4a4a;font-weight:normal;font-family:'Liberation Sans', sans-serif;">14.67</div>
<div class="t" style="left:-165.35px;width:400px;text-align:center;top:335.04px;font-size:6.4px;line-height:6.4px;color:#4a4a4a;font-weight:normal;font-family:'Liberation Sans', sans-serif;">8</div>
<div class="t" style="right:1132.20px;top:335.04px;font-size:6.4px;line-height:6.4px;color:#4a4a4a;font-weight:normal;font-family:'Liberation Sans', sans-serif;">131656</div>
<div class="t" style="left:96.80px;top:335.04px;font-size:6.4px;line-height:6.4px;color:#4a4a4a;font-weight:normal;font-family:'Liberation Sans', sans-serif;">Which phrase describes relationship marketing best?</div>
<div class="t" style="left:143.20px;width:400px;text-align:center;top:335.04px;font-size:6.4px;line-height:6.4px;color:#4a4a4a;font-weight:normal;font-family:'Liberation Sans', sans-serif;">Easy</div>
<div class="t" style="left:207.22px;width:400px;text-align:center;top:335.04px;font-size:6.4px;line-height:6.4px;color:#4a4a4a;font-weight:normal;font-family:'Liberation Sans', sans-serif;">Single choice</div>
<div class="t" style="right:693.14px;top:335.04px;font-size:6.4px;line-height:6.4px;color:#4a4a4a;font-weight:normal;font-family:'Liberation Sans', sans-serif;">0</div>
<div class="t" style="right:610.71px;top:335.04px;font-size:6.4px;line-height:6.4px;color:#4a4a4a;font-weight:normal;font-family:'Liberation Sans', sans-serif;">0</div>
<div class="t" style="right:528.28px;top:335.04px;font-size:6.4px;line-height:6.4px;color:#4a4a4a;font-weight:normal;font-family:'Liberation Sans', sans-serif;">0</div>
<div class="t" style="right:445.85px;top:335.04px;font-size:6.4px;line-height:6.4px;color:#4a4a4a;font-weight:normal;font-family:'Liberation Sans', sans-serif;">0</div>
<div class="t" style="right:363.42px;top:335.04px;font-size:6.4px;line-height:6.4px;color:#4a4a4a;font-weight:normal;font-family:'Liberation Sans', sans-serif;">0</div>
<div class="t" style="right:280.99px;top:335.04px;font-size:6.4px;line-height:6.4px;color:#4a4a4a;font-weight:normal;font-family:'Liberation Sans', sans-serif;">0</div>
<div class="t" style="right:198.56px;top:335.04px;font-size:6.4px;line-height:6.4px;color:#4a4a4a;font-weight:normal;font-family:'Liberation Sans', sans-serif;">0</div>
<div class="t" style="right:116.13px;top:335.04px;font-size:6.4px;line-height:6.4px;color:#4a4a4a;font-weight:normal;font-family:'Liberation Sans', sans-serif;">0</div>
<div class="t" style="right:32.70px;top:335.04px;font-size:6.4px;line-height:6.4px;color:#4a4a4a;font-weight:normal;font-family:'Liberation Sans', sans-serif;">0</div>
<div class="t" style="left:-165.35px;width:400px;text-align:center;top:355.72px;font-size:6.4px;line-height:6.4px;color:#4a4a4a;font-weight:normal;font-family:'Liberation Sans', sans-serif;">9</div>
<div class="t" style="right:1132.20px;top:355.72px;font-size:6.4px;line-height:6.4px;color:#4a4a4a;font-weight:normal;font-family:'Liberation Sans', sans-serif;">131655</div>
<div class="t" style="left:96.80px;top:355.72px;font-size:6.4px;line-height:6.4px;color:#4a4a4a;font-weight:normal;font-family:'Liberation Sans', sans-serif;">Match the following statements with correct term.</div>
<div class="t" style="left:143.20px;width:400px;text-align:center;top:355.72px;font-size:6.4px;line-height:6.4px;color:#4a4a4a;font-weight:normal;font-family:'Liberation Sans', sans-serif;">Easy</div>
<div class="t" style="left:207.22px;width:400px;text-align:center;top:355.72px;font-size:6.4px;line-height:6.4px;color:#4a4a4a;font-weight:normal;font-family:'Liberation Sans', sans-serif;">Matching</div>
<div class="t" style="right:693.14px;top:355.72px;font-size:6.4px;line-height:6.4px;color:#4a4a4a;font-weight:normal;font-family:'Liberation Sans', sans-serif;">0</div>
<div class="t" style="right:610.71px;top:355.72px;font-size:6.4px;line-height:6.4px;color:#4a4a4a;font-weight:normal;font-family:'Liberation Sans', sans-serif;">0</div>
<div class="t" style="right:528.28px;top:355.72px;font-size:6.4px;line-height:6.4px;color:#4a4a4a;font-weight:normal;font-family:'Liberation Sans', sans-serif;">0</div>
<div class="t" style="right:445.85px;top:355.72px;font-size:6.4px;line-height:6.4px;color:#4a4a4a;font-weight:normal;font-family:'Liberation Sans', sans-serif;">0</div>
<div class="t" style="right:363.42px;top:355.72px;font-size:6.4px;line-height:6.4px;color:#4a4a4a;font-weight:normal;font-family:'Liberation Sans', sans-serif;">0</div>
<div class="t" style="right:280.99px;top:355.72px;font-size:6.4px;line-height:6.4px;color:#4a4a4a;font-weight:normal;font-family:'Liberation Sans', sans-serif;">0</div>
<div class="t" style="right:198.56px;top:355.72px;font-size:6.4px;line-height:6.4px;color:#4a4a4a;font-weight:normal;font-family:'Liberation Sans', sans-serif;">0</div>
<div class="t" style="right:116.13px;top:355.72px;font-size:6.4px;line-height:6.4px;color:#4a4a4a;font-weight:normal;font-family:'Liberation Sans', sans-serif;">0</div>
<div class="t" style="right:32.70px;top:355.72px;font-size:6.4px;line-height:6.4px;color:#4a4a4a;font-weight:normal;font-family:'Liberation Sans', sans-serif;">0</div>
<div class="t" style="left:-165.35px;width:400px;text-align:center;top:376.40px;font-size:6.4px;line-height:6.4px;color:#4a4a4a;font-weight:normal;font-family:'Liberation Sans', sans-serif;">10</div>
<div class="t" style="right:1132.20px;top:376.40px;font-size:6.4px;line-height:6.4px;color:#4a4a4a;font-weight:normal;font-family:'Liberation Sans', sans-serif;">131654</div>
<div class="t" style="left:96.80px;top:376.40px;font-size:6.4px;line-height:6.4px;color:#4a4a4a;font-weight:normal;font-family:'Liberation Sans', sans-serif;">Which pair of theories does the Barksdale and Harris combined portfolio co...</div>
<div class="t" style="left:143.20px;width:400px;text-align:center;top:376.40px;font-size:6.4px;line-height:6.4px;color:#4a4a4a;font-weight:normal;font-family:'Liberation Sans', sans-serif;">Medium</div>
<div class="t" style="left:207.22px;width:400px;text-align:center;top:376.40px;font-size:6.4px;line-height:6.4px;color:#4a4a4a;font-weight:normal;font-family:'Liberation Sans', sans-serif;">Single choice</div>
<div class="t" style="right:693.14px;top:376.40px;font-size:6.4px;line-height:6.4px;color:#4a4a4a;font-weight:normal;font-family:'Liberation Sans', sans-serif;">3</div>
<div class="t" style="right:610.71px;top:376.40px;font-size:6.4px;line-height:6.4px;color:#4a4a4a;font-weight:normal;font-family:'Liberation Sans', sans-serif;">2</div>
<div class="t" style="right:528.28px;top:376.40px;font-size:6.4px;line-height:6.4px;color:#4a4a4a;font-weight:normal;font-family:'Liberation Sans', sans-serif;">2</div>
<div class="t" style="right:445.85px;top:376.40px;font-size:6.4px;line-height:6.4px;color:#4a4a4a;font-weight:normal;font-family:'Liberation Sans', sans-serif;">1</div>
<div class="t" style="right:363.42px;top:376.40px;font-size:6.4px;line-height:6.4px;color:#4a4a4a;font-weight:normal;font-family:'Liberation Sans', sans-serif;">66.67</div>
<div class="t" style="right:280.99px;top:376.40px;font-size:6.4px;line-height:6.4px;color:#4a4a4a;font-weight:normal;font-family:'Liberation Sans', sans-serif;">66.67</div>
<div class="t" style="right:198.56px;top:376.40px;font-size:6.4px;line-height:6.4px;color:#4a4a4a;font-weight:normal;font-family:'Liberation Sans', sans-serif;">33.33</div>
<div class="t" style="right:116.13px;top:376.40px;font-size:6.4px;line-height:6.4px;color:#4a4a4a;font-weight:normal;font-family:'Liberation Sans', sans-serif;">50.00</div>
<div class="t" style="right:32.70px;top:376.40px;font-size:6.4px;line-height:6.4px;color:#4a4a4a;font-weight:normal;font-family:'Liberation Sans', sans-serif;">10.00</div>
<svg style="left:0;top:0" width="1219" height="812">
<g transform="translate(0,-0.7)"><path d="M547.5 398.5 v3 M551 398.5 l-2 1.5 l2 1.5" stroke="#c9c9c9" stroke-width="0.9" fill="none"/>
<path d="M559 398.5 l-2 1.5 l2 1.5 M562 398.5 l-2 1.5 l2 1.5" stroke="#c9c9c9" stroke-width="0.9" fill="none"/>
<path d="M608.5 398.5 l2 1.5 l-2 1.5 M611.5 398.5 l2 1.5 l-2 1.5" stroke="#777" stroke-width="0.9" fill="none"/>
<path d="M621.5 398.5 l2 1.5 l-2 1.5 M625 398.5 v3" stroke="#777" stroke-width="0.9" fill="none"/></g>
<rect x="570.3" y="405.3" width="13.8" height="1.6" fill="#4fb5ea"/>
<rect x="635.6" y="393.4" width="28.8" height="12.8" fill="#fff" stroke="#cfd6e6" stroke-width="0.8"/>
<path d="M652.8 398.2 L656 401.4 L659.2 398.2" stroke="#222" stroke-width="1.6" fill="none"/>
</svg>
<div class="t" style="left:377.30px;width:400px;text-align:center;top:396.23px;font-size:8px;line-height:8px;color:#444;font-weight:normal;font-family:'Liberation Sans', sans-serif;">1</div>
<div class="t" style="left:392.80px;width:400px;text-align:center;top:396.23px;font-size:8px;line-height:8px;color:#555;font-weight:normal;font-family:'Liberation Sans', sans-serif;">2</div>
<div class="t" style="left:441.50px;width:400px;text-align:center;top:396.98px;font-size:6.4px;line-height:6.4px;color:#666;font-weight:normal;font-family:'Liberation Sans', sans-serif;">10</div>
<div class="t" style="right:35.10px;top:396.46px;font-size:6.9px;line-height:6.9px;color:#555;font-weight:normal;font-family:'Liberation Sans', sans-serif;">Rows: 20</div>
<svg style="left:0;top:0" width="1219" height="812"><g><path d="M1122.0 419.3 L1128.5 419.3 L1131.0 422 L1131.0 431.5 L1122.0 431.5 Z" fill="#f4f4f4" stroke="#dcdcdc" stroke-width="0.5"/><path d="M1127.9 419.0 L1130.9 423.0" stroke="#8a8a8a" stroke-width="0.9"/><rect x="1120.5" y="425.2" width="11.5" height="5.6" rx="0.8" fill="#1a7d45"/><text x="1126.25" y="429.9" font-family="Liberation Sans" font-weight="bold" font-size="4.2" text-anchor="middle" fill="#fff" opacity="0.75">XLS</text></g><g fill="#8c8c8c" opacity="0.8"><rect x="1122.3" y="420.8" width="2.2" height="4.2"/><rect x="1125.2" y="419.4" width="2.2" height="5.6"/><rect x="1128.1" y="420.2" width="2.2" height="4.8"/></g><g><path d="M1139.5 419.3 L1146 419.3 L1148.5 422 L1148.5 431.5 L1139.5 431.5 Z" fill="#f4f4f4" stroke="#dcdcdc" stroke-width="0.5"/><path d="M1145.4 419.0 L1148.4 423.0" stroke="#8a8a8a" stroke-width="0.9"/><rect x="1138" y="425.2" width="11.5" height="5.6" rx="0.8" fill="#c8151b"/><text x="1143.75" y="429.9" font-family="Liberation Sans" font-weight="bold" font-size="4.2" text-anchor="middle" fill="#fff" opacity="0.75">PDF</text></g><g><path d="M1154.0 419.3 L1160.5 419.3 L1163.0 422 L1163.0 431.5 L1154.0 431.5 Z" fill="#f4f4f4" stroke="#dcdcdc" stroke-width="0.5"/><path d="M1159.9 419.0 L1162.9 423.0" stroke="#8a8a8a" stroke-width="0.9"/><rect x="1152.5" y="425.2" width="11.5" height="5.6" rx="0.8" fill="#2b8f92"/><text x="1158.25" y="429.9" font-family="Liberation Sans" font-weight="bold" font-size="4.2" text-anchor="middle" fill="#fff" opacity="0.75">CSV</text></g><g><path d="M1171.5 419.3 L1178 419.3 L1180.5 422 L1180.5 431.5 L1171.5 431.5 Z" fill="#f4f4f4" stroke="#dcdcdc" stroke-width="0.5"/><path d="M1177.4 419.0 L1180.4 423.0" stroke="#8a8a8a" stroke-width="0.9"/><rect x="1170" y="425.2" width="11.5" height="5.6" rx="0.8" fill="#333333"/><text x="1175.75" y="429.9" font-family="Liberation Sans" font-weight="bold" font-size="4.2" text-anchor="middle" fill="#fff" opacity="0.75">XML</text></g></svg>
<div class="r" style="left:0.00px;top:427.00px;width:9.80px;height:28.60px;background:#f4f7fd;box-sizing:border-box;border:1px solid #d7def0;border-radius:2px 4px 4px 2px;"></div>
<svg style="left:0;top:0" width="20" height="812"><path d="M3.3 438.4 L7.6 442 L3.3 445.6" fill="none" stroke="#7a7a7a" stroke-width="1.1"/></svg>
<svg style="left:0;top:0" width="40" height="812"><defs><filter id="sh2" x="-50%" y="-50%" width="200%" height="200%"><feGaussianBlur in="SourceAlpha" stdDeviation="1.0"/><feOffset dx="0.2" dy="1.4"/><feComponentTransfer><feFuncA type="linear" slope="0.5"/></feComponentTransfer><feMerge><feMergeNode/><feMergeNode in="SourceGraphic"/></feMerge></filter></defs><circle cx="11.6" cy="466" r="8.6" fill="#e64447" filter="url(#sh2)"/><path d="M8.60 463.60 C8.60 461.70 10.10 461.00 11.70 461.00 C13.60 461.00 14.60 462.10 14.60 463.50 C14.60 465.10 13.40 466.20 8.40 470.60 L15.00 470.60" fill="none" stroke="#fff" stroke-width="1.25" stroke-linecap="round" stroke-linejoin="round" opacity="0.92"/></svg>
<div class="t" style="left:23.00px;top:461.26px;font-size:10.8px;line-height:10.8px;color:#2e3238;font-weight:normal;font-family:'Liberation Sans', sans-serif;transform:scaleX(0.9212021116033209);transform-origin:left center;-webkit-text-stroke:0.45px #2e3238;">Number of questions by difficulty</div>
<svg style="left:0;top:0" width="400" height="812"><circle cx="29.6" cy="515.3" r="3.4" fill="#58a51e"/><circle cx="29.6" cy="528.1" r="3.4" fill="#ff9a00"/><circle cx="29.6" cy="540.4" r="3.4" fill="#ff0000"/></svg>
<div class="t" style="left:40.80px;top:512.71px;font-size:6.6px;line-height:6.6px;color:#555;font-weight:normal;font-family:'Liberation Sans', sans-serif;transform:scaleX(1.017274472168906);transform-origin:left center;">Easy questions: 7</div>
<div class="t" style="left:40.80px;top:525.51px;font-size:6.6px;line-height:6.6px;color:#555;font-weight:normal;font-family:'Liberation Sans', sans-serif;transform:scaleX(1.017274472168906);transform-origin:left center;">Medium questions: 7</div>
<div class="t" style="left:40.80px;top:537.81px;font-size:6.6px;line-height:6.6px;color:#555;font-weight:normal;font-family:'Liberation Sans', sans-serif;transform:scaleX(1.017274472168906);transform-origin:left center;">Hard questions: 6</div>
<svg style="left:0;top:0" width="400" height="812"><path d="M262.00 571.00 A37.3 42.00 0 0 1 231.82 504.31 L243.23 513.65 A23.2 26.12 0 0 0 262.00 555.12 Z" fill="#57a51b" stroke="#fff" stroke-width="0.5"/><path d="M231.82 504.31 A37.3 42.00 0 0 1 297.47 516.02 L284.06 520.93 A23.2 26.12 0 0 0 243.23 513.65 Z" fill="#ff9900" stroke="#fff" stroke-width="0.5"/><path d="M297.47 516.02 A37.3 42.00 0 0 1 262.00 571.00 L262.00 555.12 A23.2 26.12 0 0 0 284.06 520.93 Z" fill="#ff0000" stroke="#fff" stroke-width="0.5"/><circle cx="269" cy="481" r="2.2" fill="#c9d1ea"/><path d="M269 481 L298.5 490.4 L307.5 490.4" fill="none" stroke="#c9d1ea" stroke-width="0.7"/><circle cx="297.7" cy="561.5" r="2.2" fill="#c9d1ea"/><path d="M297.7 561.5 L328 545.4 L336.7 545.4" fill="none" stroke="#c9d1ea" stroke-width="0.7"/><circle cx="220.9" cy="553.9" r="2.2" fill="#c9d1ea"/><path d="M220.9 553.9 L191.8 563.4 L182 563.4" fill="none" stroke="#c9d1ea" stroke-width="0.7"/></svg>
<div class="t" style="left:102.60px;width:400px;text-align:center;top:481.80px;font-size:6.5px;line-height:6.5px;color:#555;font-weight:normal;font-family:'Liberation Sans', sans-serif;">7</div>
<div class="t" style="left:131.80px;width:400px;text-align:center;top:536.80px;font-size:6.5px;line-height:6.5px;color:#555;font-weight:normal;font-family:'Liberation Sans', sans-serif;">6</div>
<div class="t" style="left:-13.60px;width:400px;text-align:center;top:554.50px;font-size:6.5px;line-height:6.5px;color:#555;font-weight:normal;font-family:'Liberation Sans', sans-serif;">7</div>
<svg style="left:0;top:0" width="40" height="812"><defs><filter id="sh3" x="-50%" y="-50%" width="200%" height="200%"><feGaussianBlur in="SourceAlpha" stdDeviation="1.0"/><feOffset dx="0.2" dy="1.4"/><feComponentTransfer><feFuncA type="linear" slope="0.5"/></feComponentTransfer><feMerge><feMergeNode/><feMergeNode in="SourceGraphic"/></feMerge></filter></defs><circle cx="11.6" cy="601" r="8.6" fill="#e64447" filter="url(#sh3)"/><path d="M8.70 597.10 C9.30 596.20 10.40 596.00 11.70 596.00 C13.40 596.00 14.40 596.90 14.40 598.30 C14.40 599.80 13.20 600.70 10.90 600.70 C13.50 600.70 14.80 601.80 14.80 603.30 C14.80 604.90 13.50 605.90 11.60 605.90 C10.10 605.90 8.90 605.20 8.40 604.20" fill="none" stroke="#fff" stroke-width="1.25" stroke-linecap="round" stroke-linejoin="round" opacity="0.92"/></svg>
<div class="t" style="left:23.00px;top:595.86px;font-size:10.8px;line-height:10.8px;color:#2e3238;font-weight:normal;font-family:'Liberation Sans', sans-serif;transform:scaleX(0.9019231328736435);transform-origin:left center;-webkit-text-stroke:0.45px #2e3238;">Number of questions by type</div>
<svg style="left:0;top:0" width="400" height="812"><rect x="35.4" y="632.9" width="165.9" height="157.80000000000007" fill="none" stroke="#e6e6e6" stroke-width="0.8"/><line x1="35.4" y1="659.20" x2="201.3" y2="659.20" stroke="#e6e6e6" stroke-width="0.8"/><line x1="35.4" y1="685.50" x2="201.3" y2="685.50" stroke="#e6e6e6" stroke-width="0.8"/><line x1="35.4" y1="711.80" x2="201.3" y2="711.80" stroke="#e6e6e6" stroke-width="0.8"/><line x1="35.4" y1="738.10" x2="201.3" y2="738.10" stroke="#e6e6e6" stroke-width="0.8"/><line x1="35.4" y1="764.40" x2="201.3" y2="764.40" stroke="#e6e6e6" stroke-width="0.8"/><rect x="38.3" y="632.90" width="11.6" height="157.80" fill="#fb4d4d"/><rect x="54.5" y="738.10" width="11.6" height="52.60" fill="#f5952a"/><rect x="70.9" y="738.10" width="11.6" height="52.60" fill="#f1c232"/><rect x="87.7" y="711.80" width="11.6" height="78.90" fill="#62c147"/><rect x="104.1" y="738.10" width="11.6" height="52.60" fill="#3ea8ee"/><rect x="121" y="738.10" width="11.6" height="52.60" fill="#c274dc"/><rect x="137.4" y="711.80" width="11.6" height="78.90" fill="#939393"/><rect x="204" y="640.70" width="6.6" height="6.6" rx="1" fill="#fb4d4d"/><rect x="204" y="655.08" width="6.6" height="6.6" rx="1" fill="#f5952a"/><rect x="204" y="669.46" width="6.6" height="6.6" rx="1" fill="#f1c232"/><rect x="204" y="683.84" width="6.6" height="6.6" rx="1" fill="#62c147"/><rect x="204" y="698.22" width="6.6" height="6.6" rx="1" fill="#3ea8ee"/><rect x="204" y="712.60" width="6.6" height="6.6" rx="1" fill="#c274dc"/><rect x="204" y="726.98" width="6.6" height="6.6" rx="1" fill="#939393"/><rect x="204" y="741.36" width="6.6" height="6.6" rx="1" fill="#2ba39a"/><rect x="204" y="755.74" width="6.6" height="6.6" rx="1" fill="#93dcc9"/><rect x="204" y="770.12" width="6.6" height="6.6" rx="1" fill="#8fa2cf"/></svg>
<div class="t" style="left:-171.70px;width:400px;text-align:center;top:787.68px;font-size:6.4px;line-height:6.4px;color:#666;font-weight:normal;font-family:'Liberation Sans', sans-serif;">0</div>
<div class="t" style="left:-171.70px;width:400px;text-align:center;top:761.38px;font-size:6.4px;line-height:6.4px;color:#666;font-weight:normal;font-family:'Liberation Sans', sans-serif;">1</div>
<div class="t" style="left:-171.70px;width:400px;text-align:center;top:735.08px;font-size:6.4px;line-height:6.4px;color:#666;font-weight:normal;font-family:'Liberation Sans', sans-serif;">2</div>
<div class="t" style="left:-171.70px;width:400px;text-align:center;top:708.78px;font-size:6.4px;line-height:6.4px;color:#666;font-weight:normal;font-family:'Liberation Sans', sans-serif;">3</div>
<div class="t" style="left:-171.70px;width:400px;text-align:center;top:682.48px;font-size:6.4px;line-height:6.4px;color:#666;font-weight:normal;font-family:'Liberation Sans', sans-serif;">4</div>
<div class="t" style="left:-171.70px;width:400px;text-align:center;top:656.18px;font-size:6.4px;line-height:6.4px;color:#666;font-weight:normal;font-family:'Liberation Sans', sans-serif;">5</div>
<div class="t" style="left:-171.70px;width:400px;text-align:center;top:629.88px;font-size:6.4px;line-height:6.4px;color:#666;font-weight:normal;font-family:'Liberation Sans', sans-serif;">6</div>
<div class="t" style="left:215.00px;top:641.13px;font-size:8px;line-height:8px;color:#666;font-weight:normal;font-family:'Liberation Mono', monospace;transform:scaleX(0.7029157988693842);transform-origin:left center;-webkit-text-stroke:0.12px #666;">Single choice: 6</div>
<div class="t" style="left:215.00px;top:655.51px;font-size:8px;line-height:8px;color:#666;font-weight:normal;font-family:'Liberation Mono', monospace;transform:scaleX(0.7029157988693842);transform-origin:left center;-webkit-text-stroke:0.12px #666;">Multiple choice: 2</div>
<div class="t" style="left:215.00px;top:669.89px;font-size:8px;line-height:8px;color:#666;font-weight:normal;font-family:'Liberation Mono', monospace;transform:scaleX(0.7029157988693842);transform-origin:left center;-webkit-text-stroke:0.12px #666;">True/False: 2</div>
<div class="t" style="left:215.00px;top:684.27px;font-size:8px;line-height:8px;color:#666;font-weight:normal;font-family:'Liberation Mono', monospace;transform:scaleX(0.7029157988693842);transform-origin:left center;-webkit-text-stroke:0.12px #666;">Ordering: 3</div>
<div class="t" style="left:215.00px;top:698.65px;font-size:8px;line-height:8px;color:#666;font-weight:normal;font-family:'Liberation Mono', monospace;transform:scaleX(0.7029157988693842);transform-origin:left center;-webkit-text-stroke:0.12px #666;">Matching: 2</div>
<div class="t" style="left:215.00px;top:713.03px;font-size:8px;line-height:8px;color:#666;font-weight:normal;font-family:'Liberation Mono', monospace;transform:scaleX(0.7029157988693842);transform-origin:left center;-webkit-text-stroke:0.12px #666;">Fill in the blanks: 2</div>
<div class="t" style="left:215.00px;top:727.41px;font-size:8px;line-height:8px;color:#666;font-weight:normal;font-family:'Liberation Mono', monospace;transform:scaleX(0.7029157988693842);transform-origin:left center;-webkit-text-stroke:0.12px #666;">Essay: 3</div>
<div class="t" style="left:215.00px;top:741.79px;font-size:8px;line-height:8px;color:#666;font-weight:normal;font-family:'Liberation Mono', monospace;transform:scaleX(0.7029157988693842);transform-origin:left center;-webkit-text-stroke:0.12px #666;">Open: 0</div>
<div class="t" style="left:215.00px;top:756.17px;font-size:8px;line-height:8px;color:#666;font-weight:normal;font-family:'Liberation Mono', monospace;transform:scaleX(0.7029157988693842);transform-origin:left center;-webkit-text-stroke:0.12px #666;">Matrix: 0</div>
<div class="t" style="left:215.00px;top:770.55px;font-size:8px;line-height:8px;color:#666;font-weight:normal;font-family:'Liberation Mono', monospace;transform:scaleX(0.7029157988693842);transform-origin:left center;-webkit-text-stroke:0.12px #666;">Hot Spot: 0</div>
<div class="r" style="left:1191.20px;top:742.20px;width:12.90px;height:14.60px;background:#c6c6c6;border-radius:2px;"></div>
<svg style="left:0;top:0" width="1219" height="812"><path d="M1195.7 751 L1198.9 751 L1197.3 748.5 Z" fill="#f2f2f2"/></svg>
</body></html>
